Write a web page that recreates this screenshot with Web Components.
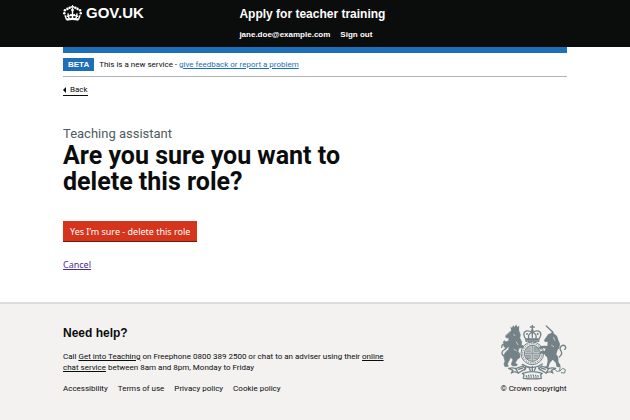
<!DOCTYPE html>
<html lang="en">
<head>
<meta charset="utf-8">
<title>Are you sure you want to delete this role? - Apply for teacher training - GOV.UK</title>
<style>
html { height: 100%; }
body {
  --ink: #0b0c0c; --blue: #1d70b8; --red: #d4351c; --grey: #505a5f; --line: #b1b4b6;
  --head: "Liberation Sans", Arial, sans-serif;
  --gutter: 10%;
  margin: 0; min-height: 100%; display: flex; flex-direction: column;
  font: 8px/11px Roboto, Arial, sans-serif; color: var(--ink); background: #fff;
}
</style>
</head>
<body>
<site-header service="Apply for teacher training">
  <site-account email="jane.doe@example.com"></site-account>
</site-header>
<phase-banner phase="Beta">This is a new service - </phase-banner>
<page-main>
  <back-link></back-link>
  <page-title caption="Teaching assistant">Are you sure you want to delete this role?</page-title>
  <confirm-actions cancel="Cancel">Yes I’m sure - delete this role</confirm-actions>
</page-main>
<site-footer>
  <help-text></help-text>
  <footer-links></footer-links>
  <crown-copyright slot="crest"></crown-copyright>
</site-footer>
<script>
function element(name, render) {
  customElements.define(name, class extends HTMLElement {
    constructor() { super(); this.attachShadow({ mode: 'open' }); }
    connectedCallback() { this.shadowRoot.innerHTML = render(this); }
  });
}

element('site-header', el => `
<style>
:host { display: block; background: var(--ink); color: #fff; padding: 0 var(--gutter); }
header { display: flex; min-height: 47px; border-bottom: 6px solid var(--blue); margin-bottom: -6px; }
.logo { flex: 0 0 35%; padding-top: 4px; }
.logo a { display: inline-flex; align-items: center; gap: 4px; color: inherit; text-decoration: none; font: bold 15px/18px var(--head); }
svg { width: 19px; height: 16px; }
.name { display: block; color: inherit; text-decoration: none; font: bold 12px/16px var(--head); padding-top: 6px; }
</style>
<header>
  <div class="logo"><a href="#" aria-label="GOV.UK">
    <svg viewBox="0 0 120 100" fill="currentColor" stroke="currentColor" stroke-width="9" aria-hidden="true">
      <g stroke="none">
      <circle cx="28" cy="24" r="8"/><circle cx="12" cy="33" r="8"/><circle cx="8" cy="51" r="8"/><circle cx="42" cy="17" r="8"/>
      <circle cx="92" cy="24" r="8"/><circle cx="108" cy="33" r="8"/><circle cx="112" cy="51" r="8"/><circle cx="78" cy="17" r="8"/>
      <circle cx="60" cy="31" r="9"/>
      <path d="M56 0h8l-2 8 9-3v13l-9-3 1 10h-6l1-10-9 3V5l9 3z"/>
      </g>
      <path d="M22 92Q60 83 98 92" fill="none" stroke-width="14"/>
      <path d="M23 92 12 64M97 92l11-28M60 34v54M46 64h28M49 57v14M71 57v14M31 52l7 32M23 71l20-6M89 52l-7 32M97 71l-20-6" fill="none"/>
    </svg><span>GOV.UK</span></a></div>
  <div><a class="name" href="#">${el.getAttribute('service')}</a><slot></slot></div>
</header>`);

element('site-account', el => `
<style>
:host { display: block; padding-top: 7px; }
nav { display: flex; gap: 10px; font: bold 8px/11px var(--head); }
a { color: inherit; text-decoration: none; }
</style>
<nav><span>${el.getAttribute('email')}</span><a href="#">Sign out</a></nav>`);

element('phase-banner', el => `
<style>
:host { display: block; padding: 11px var(--gutter) 0; }
div { display: flex; align-items: center; gap: 5px; padding-bottom: 5px; border-bottom: 1px solid var(--line); }
strong { background: var(--blue); color: #fff; font: bold 8px/13px var(--head); padding: 0 5px; text-transform: uppercase; }
a { color: var(--blue); }
</style>
<div><strong>${el.getAttribute('phase')}</strong><span><slot></slot><a href="#">give feedback or report a problem</a></span></div>`);

element('page-main', () => `
<style>:host { display: block; flex: 1; padding: 8px var(--gutter) 30px; } main { display: block; }</style>
<main><slot></slot></main>`);

element('back-link', () => `
<style>
:host { display: flex; }
a { display: flex; align-items: center; gap: 4px; color: inherit; text-decoration: none; border-bottom: 1px solid; line-height: 10px; }
a::before { content: ""; border: solid transparent; border-width: 3px 3px 3px 0; border-right-color: var(--ink); }
</style>
<a href="#">Back</a>`);

element('page-title', el => `
<style>
:host { display: block; padding-top: 28px; max-width: 60%; }
h1 { margin: 0; font-size: 25px; line-height: 26px; font-weight: bold; }
span { display: block; color: var(--grey); font-weight: normal; font-size: 13px; line-height: 19px; }
</style>
<h1><span>${el.getAttribute('caption')}</span><slot></slot></h1>`);

element('confirm-actions', el => `
<style>
:host { display: flex; flex-direction: column; align-items: flex-start; gap: 16px; padding-top: 26px; }
button, a { font: 9px/14px "Noto Sans", sans-serif; }
button { margin: 0; border: 0; border-radius: 0; padding: 4px 7px 3px; color: #fff; background: var(--red); box-shadow: inset 0 -1px 0 #651b0e; }
a { color: #4c2c92; }
</style>
<button type="button"><slot></slot></button>
<a href="#">${el.getAttribute('cancel')}</a>`);

element('site-footer', () => `
<style>
:host { display: block; background: #f3f2f1; border-top: 2px solid #dcdcdc; padding: 20px var(--gutter) 27px; }
footer { display: flex; align-items: flex-end; justify-content: space-between; gap: 24px; }
.text { flex: 0 1 336px; }
</style>
<footer><div class="text"><slot></slot></div><slot name="crest"></slot></footer>`);

element('help-text', () => `
<style>
:host { display: block; }
h2 { margin: 0 0 10px; font: bold 12px/16px var(--head); }
p { margin: 0 0 10px; }
a { color: inherit; }
</style>
<h2>Need help?</h2>
<p>Call <a href="#">Get into Teaching</a> on Freephone 0800 389 2500 or chat to an adviser using their <a href="#">online <span>chat service</span></a> between 8am and 8pm, Monday to Friday</p>`);

element('footer-links', () => `
<style>
ul { display: flex; flex-wrap: wrap; gap: 10px; list-style: none; margin: 0; padding: 0; }
:host { display: block; }
a { color: inherit; text-decoration: none; }
</style>
<ul><li><a href="#">Accessibility</a></li><li><a href="#">Terms of use</a></li><li><a href="#">Privacy policy</a></li><li><a href="#">Cookie policy</a></li></ul>`);

element('crown-copyright', () => `
<style>
:host { display: block; flex: none; }
a { display: flex; flex-direction: column; align-items: center; gap: 3px; color: inherit; text-decoration: none; }
svg { width: 67px; height: 56px; color: #738287; }
</style>
<a href="#">
<svg viewBox="44 24 201 168" fill="none" stroke="currentColor" stroke-width="4" stroke-linecap="round" stroke-linejoin="round" aria-hidden="true">
  <g fill="currentColor" stroke="none">
    <path d="M75 31l5 5 3-8 5 5 4-8 4 8 6-4-1 10 1 7H78z"/>
    <path d="M76 46q12-5 26 1l3 10-2 9 6 11-1 10 7 3-1 5-13 1-3 10q9 8 5 19l-7 5-7 12 7 3-3 5-13-1-2-5 5-13-7-7-6 12-4 8 3 7-10 1-3-8 3-8-3-12q-1-10 7-18l7-5 1-9-12 3-4-5 2-7-4-5 5-4 3 4 10-4-1-9-7 1-2-6z" stroke="currentColor" stroke-width="2"/>
    <path d="M189 54l8-2 5-8 4 9q11 5 12 17l6 14-2 12-5 5-4 14q8 9 6 22l7 12-2 5-10-1-3-13-9-9-9 11-4 14-10 2-2-5 7-3 3-16-2-11q-6-3-8-9l-12-2-1-5 7-3 6 2 4-8-10-2-6 4-5-4 5-6 12-1 9 1 1-13-8 1-3-5z"/>
  </g>
  <path d="M202 48 183 30M64 123C49 121 46 108 56 102q11-6 9-14-2-7-10-4-6 2-6 10M222 123q11-9 5-18-6-8 1-15 7-5 12 1 3 6-2 9"/>
  <path d="M208 160q9 12 15 2 4-9-2-12M223 166l9-9 8 4-2 10-10-1" stroke-width="3"/>
  <path d="M85 56l4 2M93 78l5 8M86 100l7 4M205 64l3 9M199 88l6 4" stroke="#f3f2f1" stroke-width="2"/>
  <path d="M121 69q-9-14-3-21 8-7 23 1 15-8 23-1 6 7-3 21zM121 72h40M130 66q-3-12 11-18 14 6 11 18M141 46v18M141 28v14M135 33h12"/>
  <path d="M122 76h38" stroke-dasharray="3 4"/>
  <g fill="currentColor" stroke="none"><circle cx="141" cy="44" r="4"/><circle cx="125" cy="54" r="3"/><circle cx="157" cy="54" r="3"/></g>
  <ellipse cx="141" cy="112" rx="34" ry="34" stroke-width="3"/>
  <ellipse cx="141" cy="112" rx="29" ry="29" stroke-width="3" stroke-dasharray="2 5"/>
  <circle cx="141" cy="112" r="24" fill="#c8cdce" stroke-width="3"/>
  <path d="M141 88v48M118 112h46M124 96h11M123 102h12M124 107h11M148 94h11v12h-11zM151 97v6M155 97v6M123 118h12v10h-12zM127 119v8M131 119v8M146 118h13M146 123h13M146 128h9" stroke-width="2"/>
  <path d="M111 145q30 20 60-1M122 152l-4 10M160 152l4 10M141 151v13M131 156l4 7M151 156l-4 7"/>
  <path d="M70 157q12-3 21 1l21-8 9 8-22 13q-12-7-21 0l5-8zM211 157q-12-3-21 1l-21-8-9 8 22 13q12-7 21 0l-5-8z" fill="#f3f2f1"/>
  <path d="M91 158l8 13M190 158l-8 13M99 160l13-4M180 160l-12-4"/>
  <path d="M111 172q30-10 60 0l-5 4 2 11q-27 3-54 0l2-11z" fill="#f3f2f1"/>
  <path d="M121 180q20-5 40 0M122 183h38" stroke-width="4" stroke-dasharray="4 3" stroke-linecap="butt"/>
</svg>
<span>© Crown copyright</span></a>`);
</script>
</body>
</html>
